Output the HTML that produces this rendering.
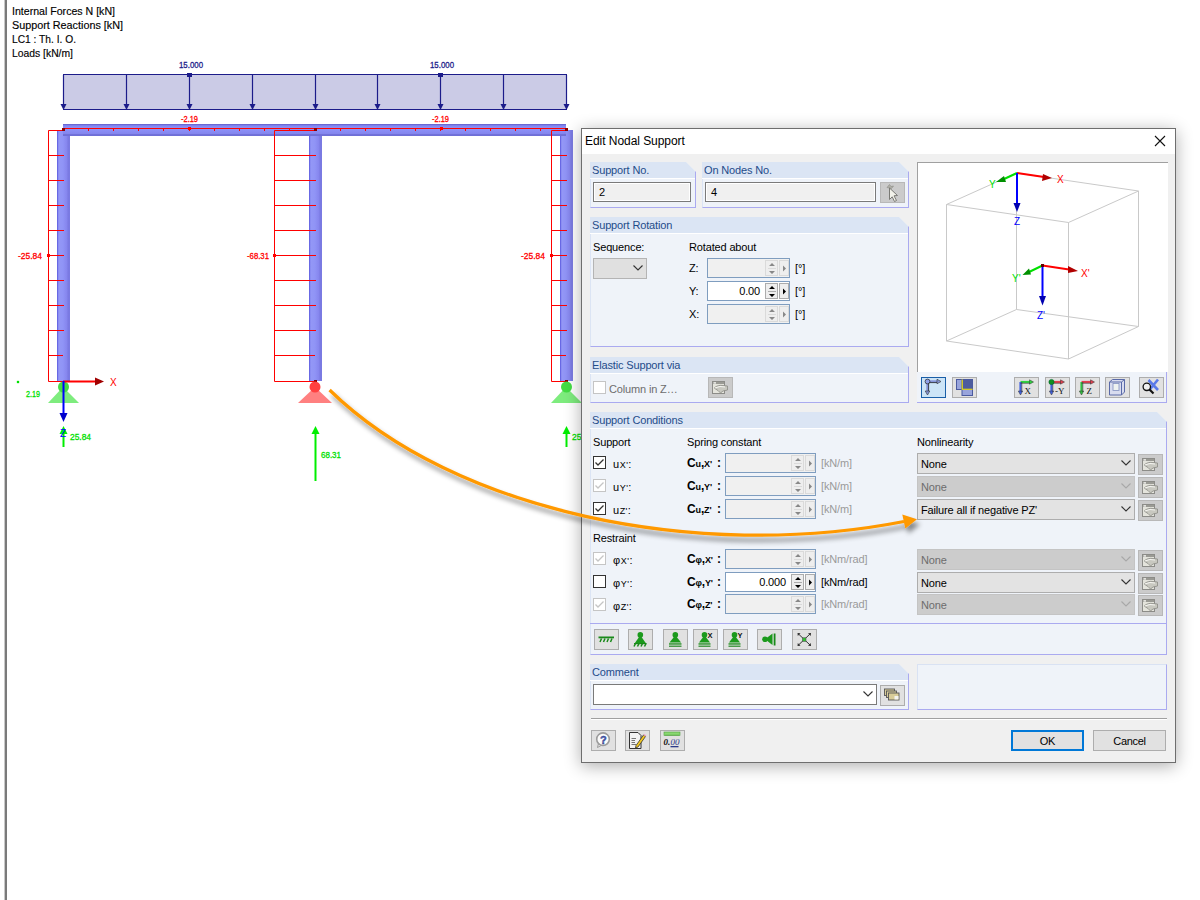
<!DOCTYPE html>
<html><head><meta charset="utf-8">
<style>
html,body{margin:0;padding:0;width:1200px;height:900px;overflow:hidden;background:#fff;}
body{position:relative;font-family:"Liberation Sans",sans-serif;}
.abs{position:absolute;}
svg{position:absolute;left:0;top:0;}
.t{position:absolute;font-size:11px;letter-spacing:-0.15px;white-space:nowrap;line-height:14px;color:#000;}
.grp{position:absolute;box-sizing:border-box;background:#eff3f9;border-left:1px solid #dbe4f4;border-right:1px solid #aaaaf0;border-bottom:1px solid #aaaaf0;clip-path:polygon(0 0,calc(100% - 10px) 0,100% 10px,100% 100%,0 100%);}
.gh{position:absolute;left:-1px;top:0;right:0;height:16px;background:#dbe5f4;border-bottom:1px solid #fff;font-size:11px;letter-spacing:-0.15px;color:#1f4c8a;line-height:16px;padding-left:2px;white-space:nowrap;}
.gh span{position:relative;top:-1px;}
.box{position:absolute;box-sizing:border-box;}
.inp{position:absolute;box-sizing:border-box;border:1px solid #7f9dbf;background:#f0f0f0;}
.inp.en{background:#fff;}
.spn{position:absolute;box-sizing:border-box;top:1px;bottom:1px;border:1px solid #dadada;background:#eeeeee;}
.en .spn{border-color:#acacac;}
.cmb{position:absolute;box-sizing:border-box;border:1px solid #adadad;background:#e3e3e3;height:21px;}
.cmb.dis{border-color:#c4c4c4;background:#cccccc;}
.btn{position:absolute;box-sizing:border-box;border:1px solid #adadad;background:#e1e1e1;}
.chk{position:absolute;box-sizing:border-box;width:13px;height:13px;border:1px solid #333;background:#fff;}
.chk.dis{border-color:#c5c5c5;}

</style></head>
<body>
<!-- left frame line -->
<div class="abs" style="left:4px;top:0;width:1px;height:900px;background:#c8c8c8"></div>
<div class="abs" style="left:5px;top:0;width:2px;height:900px;background:#7a7a7a"></div>

<!-- structure drawing -->
<svg width="1200" height="900" viewBox="0 0 1200 900" style="font-family:'Liberation Sans',sans-serif">
  <g font-size="11" fill="#000" stroke="#000" stroke-width="0.15">
    <text x="12" y="15" textLength="103" lengthAdjust="spacingAndGlyphs">Internal Forces N [kN]</text>
    <text x="12" y="29" textLength="111" lengthAdjust="spacingAndGlyphs">Support Reactions [kN]</text>
    <text x="12" y="43" textLength="64" lengthAdjust="spacingAndGlyphs">LC1 : Th. I. O.</text>
    <text x="12" y="57" textLength="61" lengthAdjust="spacingAndGlyphs">Loads [kN/m]</text>
  </g>
  <!-- load -->
  <rect x="63.5" y="74.5" width="503" height="35" fill="#cbcbe6" stroke="#1c1c8a" stroke-width="1"/>
  <g stroke="#1c1c8a" stroke-width="1.2" fill="#1c1c8a">
    <line x1="63.5" y1="75" x2="63.5" y2="105"/>
    <line x1="126.5" y1="75" x2="126.5" y2="105"/>
    <line x1="189.5" y1="75" x2="189.5" y2="105"/>
    <line x1="252.5" y1="75" x2="252.5" y2="105"/>
    <line x1="315.5" y1="75" x2="315.5" y2="105"/>
    <line x1="377.5" y1="75" x2="377.5" y2="105"/>
    <line x1="440.5" y1="75" x2="440.5" y2="105"/>
    <line x1="503.5" y1="75" x2="503.5" y2="105"/>
    <line x1="566.5" y1="75" x2="566.5" y2="105"/>
  </g>
  <g fill="#1c1c8a">
    <path d="M60.5 104 L66.5 104 L63.5 110 Z"/>
    <path d="M123.5 104 L129.5 104 L126.5 110 Z"/>
    <path d="M186.5 104 L192.5 104 L189.5 110 Z"/>
    <path d="M249.5 104 L255.5 104 L252.5 110 Z"/>
    <path d="M312.5 104 L318.5 104 L315.5 110 Z"/>
    <path d="M374.5 104 L380.5 104 L377.5 110 Z"/>
    <path d="M437.5 104 L443.5 104 L440.5 110 Z"/>
    <path d="M500.5 104 L506.5 104 L503.5 110 Z"/>
    <path d="M563.5 104 L569.5 104 L566.5 110 Z"/>
    <rect x="187" y="73" width="5" height="4"/>
    <rect x="438" y="73" width="5" height="4"/>
  </g>
  <g font-size="9.3" fill="#1c1c8a" stroke="#1c1c8a" stroke-width="0.3">
    <text x="179" y="68" textLength="24" lengthAdjust="spacingAndGlyphs">15.000</text>
    <text x="430" y="68" textLength="24" lengthAdjust="spacingAndGlyphs">15.000</text>
  </g>
  <!-- beam & columns -->
  <defs>
    <linearGradient id="gb" x1="0" y1="0" x2="0" y2="1">
      <stop offset="0" stop-color="#6a6ad2"/><stop offset="0.09" stop-color="#6a6ad2"/>
      <stop offset="0.09" stop-color="#7a7cec"/><stop offset="0.25" stop-color="#8a90f6"/>
      <stop offset="0.45" stop-color="#8c90f8"/><stop offset="0.8" stop-color="#8486ee"/>
      <stop offset="0.83" stop-color="#7272da"/><stop offset="1" stop-color="#6e6ed6"/>
    </linearGradient>
    <linearGradient id="gc" x1="0" y1="0" x2="1" y2="0">
      <stop offset="0" stop-color="#6868e4"/><stop offset="0.1" stop-color="#6868e4"/>
      <stop offset="0.12" stop-color="#9498f6"/><stop offset="0.45" stop-color="#9094f6"/>
      <stop offset="0.75" stop-color="#8686ee"/><stop offset="0.85" stop-color="#7a7ae2"/><stop offset="1" stop-color="#7a7ae2"/>
    </linearGradient>
  </defs>
  <rect x="57" y="130" width="13" height="251" fill="url(#gc)"/>
  <rect x="309" y="130" width="13" height="251" fill="url(#gc)"/>
  <rect x="560" y="130" width="13" height="251" fill="url(#gc)"/>
  <rect x="63" y="124" width="503" height="12" fill="url(#gb)"/>
  <!-- red N diagram -->
  <g stroke="#ff0000" stroke-width="1" fill="none">
    <line x1="63" y1="128.5" x2="566" y2="128.5"/>
    <path id="tk" d="M88.5 128 v3 M113.5 128 v3 M138.5 128 v3 M163.5 128 v3 M189.5 128 v3 M214.5 128 v3 M239.5 128 v3 M264.5 128 v3 M289.5 128 v3 M340.5 128 v3 M365.5 128 v3 M390.5 128 v3 M415.5 128 v3 M440.5 128 v3 M465.5 128 v3 M490.5 128 v3 M515.5 128 v3 M540.5 128 v3"/>
    <path d="M48.5 130.5 H64 M48.5 130.5 V381.5 H64 M48.5 155.5 H64 M48.5 180.5 H64 M48.5 205.5 H64 M48.5 230.5 H64 M48.5 255.5 H64 M48.5 280.5 H64 M48.5 305.5 H64 M48.5 330.5 H64 M48.5 355.5 H63"/>
    <path d="M274.5 130.5 H316 M274.5 130.5 V381.5 H316 M274.5 155.5 H316 M274.5 180.5 H316 M274.5 205.5 H316 M274.5 230.5 H316 M274.5 255.5 H316 M274.5 280.5 H316 M274.5 305.5 H316 M274.5 330.5 H316 M274.5 355.5 H315"/>
    <path d="M551.5 130.5 H567 M551.5 130.5 V381.5 H567 M551.5 155.5 H567 M551.5 180.5 H567 M551.5 205.5 H567 M551.5 230.5 H567 M551.5 255.5 H567 M551.5 280.5 H567 M551.5 305.5 H567 M551.5 330.5 H567 M551.5 355.5 H566"/>
  </g>
  <g fill="#8b0000">
    <rect x="62" y="128" width="3" height="3"/>
    <rect x="314" y="128" width="3" height="3"/>
    <rect x="565" y="128" width="3" height="3"/>
    <rect x="314" y="380" width="3" height="3"/>
    <rect x="565" y="380" width="3" height="3"/>
  </g>
  <g fill="#ff0000">
    <rect x="188" y="127" width="3" height="3"/>
    <rect x="440" y="127" width="3" height="3"/>
    <rect x="47" y="254" width="3" height="3"/>
    <rect x="273" y="254" width="3" height="3"/>
    <rect x="550" y="254" width="3" height="3"/>
  </g>
  <g font-size="9.3" fill="#ff0000" stroke="#ff0000" stroke-width="0.3">
    <text x="181" y="122" textLength="17" lengthAdjust="spacingAndGlyphs">-2.19</text>
    <text x="432" y="122" textLength="17" lengthAdjust="spacingAndGlyphs">-2.19</text>
    <text x="18" y="259" textLength="24" lengthAdjust="spacingAndGlyphs">-25.84</text>
    <text x="247" y="259" textLength="22" lengthAdjust="spacingAndGlyphs">-68.31</text>
    <text x="521" y="259" textLength="24" lengthAdjust="spacingAndGlyphs">-25.84</text>
  </g>
  <!-- supports -->
  <g>
    <path d="M48 403 L79 403 L63 387 Z" fill="#7eec7e"/>
    <circle cx="63.5" cy="387" r="5.5" fill="#44dc44"/>
    <path d="M298 403 L332 403 L315 387 Z" fill="#ff8080"/>
    <circle cx="315" cy="387" r="5.5" fill="#ff4040"/>
    <path d="M551 403 L582 403 L566 387 Z" fill="#7eec7e"/>
    <circle cx="566.5" cy="387" r="5.5" fill="#44dc44"/>
  </g>
  <!-- axes -->
  <line x1="63" y1="381.5" x2="96" y2="381.5" stroke="#ff0000" stroke-width="2"/>
  <path d="M95 377.5 L104 381.5 L95 385.5 Z" fill="#a00000"/>
  <text x="110" y="386" font-size="10" fill="#ff0000">X</text>
  <line x1="63.5" y1="381" x2="63.5" y2="414" stroke="#0000ff" stroke-width="2"/>
  <path d="M59.5 413 L67.5 413 L63.5 422 Z" fill="#0000cc"/>
  <!-- reactions -->
  <g stroke="#00ee00" stroke-width="2">
    <line x1="63.5" y1="447" x2="63.5" y2="432"/>
    <line x1="315.5" y1="481" x2="315.5" y2="432"/>
    <line x1="566.5" y1="447" x2="566.5" y2="432"/>
  </g>
  <g fill="#00ee00">
    <path d="M59.5 434 L67.5 434 L63.5 426 Z"/>
    <path d="M311.5 434 L319.5 434 L315.5 426 Z"/>
    <path d="M562.5 434 L570.5 434 L566.5 426 Z"/>
  </g>
  <text x="60" y="437" font-size="10" fill="#0000ff">Z</text>
  <g font-size="9.3" fill="#00e000" stroke="#00e000" stroke-width="0.3">
    <text x="70" y="440" textLength="21" lengthAdjust="spacingAndGlyphs">25.84</text>
    <text x="321" y="458" textLength="20" lengthAdjust="spacingAndGlyphs">68.31</text>
    <text x="572" y="440" textLength="21" lengthAdjust="spacingAndGlyphs">25.84</text>
    <text x="26" y="397" textLength="14" lengthAdjust="spacingAndGlyphs">2.19</text>
    <rect x="17" y="381" width="2" height="2"/>
  </g>
</svg>

<!-- DIALOG -->
<div class="box" style="left:581px;top:128px;width:595px;height:635px;border:1px solid #6e6e6e;background:#f0f0f0;box-shadow:0 3px 16px rgba(0,0,0,0.32)"></div>
<div class="box" style="left:582px;top:129px;width:593px;height:25px;background:#fff"></div>
<div class="t" style="left:585px;top:134px;font-size:12px;letter-spacing:-0.05px">Edit Nodal Support</div>
<svg style="left:1154px;top:135px" width="12" height="12"><path d="M1 1 L11 11 M11 1 L1 11" stroke="#111" stroke-width="1.1"/></svg>
<div class="grp" style="left:590px;top:162px;width:106px;height:46px"><div class="gh">Support No.</div></div>
<div class="grp" style="left:702px;top:162px;width:207px;height:46px"><div class="gh">On Nodes No.</div></div>
<div class="grp" style="left:590px;top:217px;width:319px;height:130px"><div class="gh">Support Rotation</div></div>
<div class="grp" style="left:590px;top:357px;width:319px;height:46px"><div class="gh">Elastic Support via</div></div>
<div class="grp" style="left:590px;top:412px;width:577px;height:243px"><div class="gh">Support Conditions</div></div>
<div class="grp" style="left:590px;top:664px;width:319px;height:46px"><div class="gh">Comment</div></div>
<div class="box" style="left:917px;top:664px;width:250px;height:46px;background:#eff3f9;border-top:1px solid #d9e2f3;border-left:1px solid #d9e2f3;border-right:1px solid #aaaaf0;border-bottom:1px solid #aaaaf0"></div>
<div class="box" style="left:917px;top:372px;width:250px;height:31px;background:#eff3f9;border-right:1px solid #aaaaf0;border-bottom:1px solid #aaaaf0"></div>
<div class="box" style="left:917px;top:162px;width:251px;height:210px;background:#fff;border-top:1px solid #a0a0a0;border-left:1px solid #a0a0a0"></div>
<svg style="left:917px;top:163px" width="250" height="209" viewBox="917 163 250 209">
<g stroke="#c9c9c9" stroke-width="1" fill="none">
<path d="M946.5 204.5 L1016.5 173 L1138.5 191 L1068.5 222.5 Z"/>
<path d="M946.5 341 L1016.5 309.5 L1138.5 326.5 L1068.5 359 Z"/>
<path d="M946.5 204.5 V341 M1016.5 173 V309.5 M1138.5 191 V326.5 M1068.5 222.5 V359"/>
</g>
<g stroke-width="2" fill="none">
<line x1="1017" y1="173" x2="1044" y2="177" stroke="#ff0000"/>
<line x1="1017" y1="173" x2="1002" y2="180" stroke="#00e000"/>
<line x1="1017" y1="173" x2="1017" y2="204" stroke="#0000ff"/>
<line x1="1042.5" y1="265.5" x2="1069" y2="269.5" stroke="#ff0000"/>
<line x1="1042.5" y1="265.5" x2="1028" y2="272.5" stroke="#00e000"/>
<line x1="1042.5" y1="265.5" x2="1042.5" y2="297" stroke="#0000ff"/>
</g>
<g>
<path d="M1043 174 L1052 178 L1042 181 Z" fill="#b00000"/>
<path d="M1004 176 L996 182 L1006 182 Z" fill="#009000"/>
<path d="M1013.5 203 L1020.5 203 L1017 212 Z" fill="#0000b0"/>
<path d="M1068 266 L1078 271 L1068 273 Z" fill="#b00000"/>
<path d="M1029 268.5 L1022.5 275 L1031 274.5 Z" fill="#009000"/>
<path d="M1039 296 L1046 296 L1042.5 305.5 Z" fill="#0000b0"/>
<rect x="1041" y="264" width="3" height="3" fill="#600000"/>
</g>
<g font-size="10" font-family="Liberation Sans">
<text x="1057" y="183" fill="#ff0000">X</text>
<text x="989" y="188" fill="#00e000">Y</text>
<text x="1014" y="225" fill="#0000ff">Z</text>
<text x="1081" y="277" fill="#ff0000">X'</text>
<text x="1012" y="282" fill="#00e000">Y'</text>
<text x="1037" y="319" fill="#0000ff">Z'</text>
</g>
</svg>
<div class="box" style="left:591px;top:718px;width:576px;height:1px;background:#a0a0a0"></div>
<div class="box" style="left:591px;top:719px;width:576px;height:1px;background:#fff"></div>
<div class="box" style="left:593px;top:182px;width:98px;height:20px;border:1px solid #7a7a7a;background:#f0f0f0;box-shadow:inset 0 0 0 1px #fff"></div>
<div class="t" style="left:599px;top:185px;">2</div>
<div class="box" style="left:705px;top:182px;width:171px;height:20px;border:1px solid #7a7a7a;background:#f0f0f0;box-shadow:inset 0 0 0 1px #fff"></div>
<div class="t" style="left:711px;top:185px;">4</div>
<div class="box" style="left:880px;top:182px;width:25px;height:21px;background:#cbcbcb;border:1px solid #b8b8b8"></div>
<div class="t" style="left:593px;top:240px;">Sequence:</div>
<div class="t" style="left:689px;top:240px;">Rotated about</div>
<div class="cmb" style="left:593px;top:258px;width:54px;background:#e0e0e0;border-color:#b4b4b4"></div>
<svg style="left:633px;top:265px" width="10" height="6"><path d="M0.5 0.5 L5 5 L9.5 0.5" fill="none" stroke="#333" stroke-width="1.1"/></svg>
<div class="t" style="left:689px;top:261px;">Z:</div>
<div class="t" style="left:689px;top:284px;">Y:</div>
<div class="t" style="left:689px;top:307px;">X:</div>
<div class="inp" style="left:707px;top:258px;width:83px;height:20px"><div class="spn" style="left:57px;width:13px"></div><div class="spn" style="left:71px;width:10px"></div><svg style="left:60px;top:3px" width="8" height="13"><path d="M1 4 L4 1 L7 4 Z M1 9 L4 12 L7 9 Z" fill="#888"/><rect x="0" y="6" width="8" height="1" fill="#dadada"/></svg><svg style="left:74px;top:6px" width="5" height="8"><path d="M1 0.5 L4 3.5 L1 6.5 Z" fill="#888"/></svg></div>
<div class="inp en" style="left:707px;top:281px;width:83px;height:20px"><div class="spn" style="left:57px;width:13px"></div><div class="spn" style="left:71px;width:10px"></div><svg style="left:60px;top:3px" width="8" height="13"><path d="M1 4 L4 1 L7 4 Z M1 9 L4 12 L7 9 Z" fill="#000"/><rect x="0" y="6" width="8" height="1" fill="#acacac"/></svg><svg style="left:74px;top:6px" width="5" height="8"><path d="M1 0.5 L4 3.5 L1 6.5 Z" fill="#000"/></svg></div><div class="t" style="left:707px;top:284px;width:53px;text-align:right">0.00</div>
<div class="inp" style="left:707px;top:304px;width:83px;height:20px"><div class="spn" style="left:57px;width:13px"></div><div class="spn" style="left:71px;width:10px"></div><svg style="left:60px;top:3px" width="8" height="13"><path d="M1 4 L4 1 L7 4 Z M1 9 L4 12 L7 9 Z" fill="#888"/><rect x="0" y="6" width="8" height="1" fill="#dadada"/></svg><svg style="left:74px;top:6px" width="5" height="8"><path d="M1 0.5 L4 3.5 L1 6.5 Z" fill="#888"/></svg></div>
<div class="t" style="left:795px;top:261px;">[°]</div>
<div class="t" style="left:795px;top:284px;">[°]</div>
<div class="t" style="left:795px;top:307px;">[°]</div>
<div class="chk dis" style="left:593px;top:381px"></div>
<div class="t" style="left:609px;top:382px;color:#6d6d6d">Column in Z…</div>
<div class="box" style="left:708px;top:377px;width:25px;height:21px;background:#cbcbcb;border:1px solid #b8b8b8"></div>
<div class="t" style="left:593px;top:435px;">Support</div>
<div class="t" style="left:687px;top:435px;">Spring constant</div>
<div class="t" style="left:917px;top:435px;">Nonlinearity</div>
<div class="chk" style="left:593px;top:456px"></div>
<svg style="left:595px;top:459px" width="9" height="7"><path d="M0.5 3.5 L3 6 L8.5 0.5" fill="none" stroke="#333" stroke-width="1.3"/></svg>
<div class="t" style="left:613px;letter-spacing:0.5px;top:457px;">u<span style="font-size:9px">X'</span>:</div>
<div class="chk dis" style="left:593px;top:479px"></div>
<svg style="left:595px;top:482px" width="9" height="7"><path d="M0.5 3.5 L3 6 L8.5 0.5" fill="none" stroke="#c5c5c5" stroke-width="1.3"/></svg>
<div class="t" style="left:613px;letter-spacing:0.5px;top:480px;">u<span style="font-size:9px">Y'</span>:</div>
<div class="chk" style="left:593px;top:502px"></div>
<svg style="left:595px;top:505px" width="9" height="7"><path d="M0.5 3.5 L3 6 L8.5 0.5" fill="none" stroke="#333" stroke-width="1.3"/></svg>
<div class="t" style="left:613px;letter-spacing:0.5px;top:503px;">u<span style="font-size:9px">Z'</span>:</div>
<div class="t" style="left:687px;top:456px;font-size:12px"><b>C<span style="font-size:9px">u</span>,<span style="font-size:9px">X'</span></b></div>
<div class="t" style="left:717px;top:456px;font-size:12px"><b>:</b></div>
<div class="inp" style="left:725px;top:453px;width:91px;height:20px"><div class="spn" style="left:65px;width:13px"></div><div class="spn" style="left:79px;width:10px"></div><svg style="left:68px;top:3px" width="8" height="13"><path d="M1 4 L4 1 L7 4 Z M1 9 L4 12 L7 9 Z" fill="#888"/><rect x="0" y="6" width="8" height="1" fill="#dadada"/></svg><svg style="left:82px;top:6px" width="5" height="8"><path d="M1 0.5 L4 3.5 L1 6.5 Z" fill="#888"/></svg></div>
<div class="t" style="left:821px;top:456px;color:#9a9a9a">[kN/m]</div>
<div class="t" style="left:687px;top:479px;font-size:12px"><b>C<span style="font-size:9px">u</span>,<span style="font-size:9px">Y'</span></b></div>
<div class="t" style="left:717px;top:479px;font-size:12px"><b>:</b></div>
<div class="inp" style="left:725px;top:476px;width:91px;height:20px"><div class="spn" style="left:65px;width:13px"></div><div class="spn" style="left:79px;width:10px"></div><svg style="left:68px;top:3px" width="8" height="13"><path d="M1 4 L4 1 L7 4 Z M1 9 L4 12 L7 9 Z" fill="#888"/><rect x="0" y="6" width="8" height="1" fill="#dadada"/></svg><svg style="left:82px;top:6px" width="5" height="8"><path d="M1 0.5 L4 3.5 L1 6.5 Z" fill="#888"/></svg></div>
<div class="t" style="left:821px;top:479px;color:#9a9a9a">[kN/m]</div>
<div class="t" style="left:687px;top:502px;font-size:12px"><b>C<span style="font-size:9px">u</span>,<span style="font-size:9px">Z'</span></b></div>
<div class="t" style="left:717px;top:502px;font-size:12px"><b>:</b></div>
<div class="inp" style="left:725px;top:499px;width:91px;height:20px"><div class="spn" style="left:65px;width:13px"></div><div class="spn" style="left:79px;width:10px"></div><svg style="left:68px;top:3px" width="8" height="13"><path d="M1 4 L4 1 L7 4 Z M1 9 L4 12 L7 9 Z" fill="#888"/><rect x="0" y="6" width="8" height="1" fill="#dadada"/></svg><svg style="left:82px;top:6px" width="5" height="8"><path d="M1 0.5 L4 3.5 L1 6.5 Z" fill="#888"/></svg></div>
<div class="t" style="left:821px;top:502px;color:#9a9a9a">[kN/m]</div>
<div class="cmb" style="left:917px;top:453px;width:218px"></div><div class="t" style="left:921px;top:457px;">None</div><svg style="left:1121px;top:460px" width="10" height="6"><path d="M0.5 0.5 L5 5 L9.5 0.5" fill="none" stroke="#333" stroke-width="1.1"/></svg><div class="box" style="left:1138px;top:454px;width:25px;height:21px;background:#cbcbcb;border:1px solid #b8b8b8"></div>
<div class="cmb dis" style="left:917px;top:476px;width:218px"></div><div class="t" style="left:921px;top:480px;color:#6d6d6d">None</div><svg style="left:1121px;top:483px" width="10" height="6"><path d="M0.5 0.5 L5 5 L9.5 0.5" fill="none" stroke="#a8a8a8" stroke-width="1.1"/></svg><div class="box" style="left:1138px;top:477px;width:25px;height:21px;background:#cbcbcb;border:1px solid #b8b8b8"></div>
<div class="cmb" style="left:917px;top:499px;width:218px"></div><div class="t" style="left:921px;top:503px;">Failure all if negative PZ'</div><svg style="left:1121px;top:506px" width="10" height="6"><path d="M0.5 0.5 L5 5 L9.5 0.5" fill="none" stroke="#333" stroke-width="1.1"/></svg><div class="box" style="left:1138px;top:500px;width:25px;height:21px;background:#cbcbcb;border:1px solid #b8b8b8"></div>
<div class="t" style="left:593px;top:531px;">Restraint</div>
<div class="chk dis" style="left:593px;top:552px"></div>
<svg style="left:595px;top:555px" width="9" height="7"><path d="M0.5 3.5 L3 6 L8.5 0.5" fill="none" stroke="#c5c5c5" stroke-width="1.3"/></svg>
<div class="t" style="left:613px;letter-spacing:0.5px;top:553px;"><span style="color:#000">φ</span><span style="font-size:9px">X'</span>:</div>
<div class="chk" style="left:593px;top:575px"></div>
<div class="t" style="left:613px;letter-spacing:0.5px;top:576px;"><span style="color:#000">φ</span><span style="font-size:9px">Y'</span>:</div>
<div class="chk dis" style="left:593px;top:598px"></div>
<svg style="left:595px;top:601px" width="9" height="7"><path d="M0.5 3.5 L3 6 L8.5 0.5" fill="none" stroke="#c5c5c5" stroke-width="1.3"/></svg>
<div class="t" style="left:613px;letter-spacing:0.5px;top:599px;"><span style="color:#000">φ</span><span style="font-size:9px">Z'</span>:</div>
<div class="t" style="left:687px;top:552px;font-size:12px"><b>C<span style="font-size:9px">φ</span>,<span style="font-size:9px">X'</span></b></div>
<div class="t" style="left:717px;top:552px;font-size:12px"><b>:</b></div>
<div class="inp" style="left:725px;top:549px;width:91px;height:20px"><div class="spn" style="left:65px;width:13px"></div><div class="spn" style="left:79px;width:10px"></div><svg style="left:68px;top:3px" width="8" height="13"><path d="M1 4 L4 1 L7 4 Z M1 9 L4 12 L7 9 Z" fill="#888"/><rect x="0" y="6" width="8" height="1" fill="#dadada"/></svg><svg style="left:82px;top:6px" width="5" height="8"><path d="M1 0.5 L4 3.5 L1 6.5 Z" fill="#888"/></svg></div>
<div class="t" style="left:821px;top:552px;color:#9a9a9a">[kNm/rad]</div>
<div class="t" style="left:687px;top:575px;font-size:12px"><b>C<span style="font-size:9px">φ</span>,<span style="font-size:9px">Y'</span></b></div>
<div class="t" style="left:717px;top:575px;font-size:12px"><b>:</b></div>
<div class="inp en" style="left:725px;top:572px;width:91px;height:20px"><div class="spn" style="left:65px;width:13px"></div><div class="spn" style="left:79px;width:10px"></div><svg style="left:68px;top:3px" width="8" height="13"><path d="M1 4 L4 1 L7 4 Z M1 9 L4 12 L7 9 Z" fill="#000"/><rect x="0" y="6" width="8" height="1" fill="#acacac"/></svg><svg style="left:82px;top:6px" width="5" height="8"><path d="M1 0.5 L4 3.5 L1 6.5 Z" fill="#000"/></svg></div><div class="t" style="left:725px;top:575px;width:61px;text-align:right">0.000</div>
<div class="t" style="left:821px;top:575px;">[kNm/rad]</div>
<div class="t" style="left:687px;top:597px;font-size:12px"><b>C<span style="font-size:9px">φ</span>,<span style="font-size:9px">Z'</span></b></div>
<div class="t" style="left:717px;top:597px;font-size:12px"><b>:</b></div>
<div class="inp" style="left:725px;top:594px;width:91px;height:20px"><div class="spn" style="left:65px;width:13px"></div><div class="spn" style="left:79px;width:10px"></div><svg style="left:68px;top:3px" width="8" height="13"><path d="M1 4 L4 1 L7 4 Z M1 9 L4 12 L7 9 Z" fill="#888"/><rect x="0" y="6" width="8" height="1" fill="#dadada"/></svg><svg style="left:82px;top:6px" width="5" height="8"><path d="M1 0.5 L4 3.5 L1 6.5 Z" fill="#888"/></svg></div>
<div class="t" style="left:821px;top:597px;color:#9a9a9a">[kNm/rad]</div>
<div class="cmb dis" style="left:917px;top:549px;width:218px"></div><div class="t" style="left:921px;top:553px;color:#6d6d6d">None</div><svg style="left:1121px;top:556px" width="10" height="6"><path d="M0.5 0.5 L5 5 L9.5 0.5" fill="none" stroke="#a8a8a8" stroke-width="1.1"/></svg><div class="box" style="left:1138px;top:550px;width:25px;height:21px;background:#cbcbcb;border:1px solid #b8b8b8"></div>
<div class="cmb" style="left:917px;top:572px;width:218px"></div><div class="t" style="left:921px;top:576px;">None</div><svg style="left:1121px;top:579px" width="10" height="6"><path d="M0.5 0.5 L5 5 L9.5 0.5" fill="none" stroke="#333" stroke-width="1.1"/></svg><div class="box" style="left:1138px;top:573px;width:25px;height:21px;background:#cbcbcb;border:1px solid #b8b8b8"></div>
<div class="cmb dis" style="left:917px;top:594px;width:218px"></div><div class="t" style="left:921px;top:598px;color:#6d6d6d">None</div><svg style="left:1121px;top:601px" width="10" height="6"><path d="M0.5 0.5 L5 5 L9.5 0.5" fill="none" stroke="#a8a8a8" stroke-width="1.1"/></svg><div class="box" style="left:1138px;top:595px;width:25px;height:21px;background:#cbcbcb;border:1px solid #b8b8b8"></div>
<div class="box" style="left:590px;top:623px;width:576px;height:1px;background:#aaaaf0"></div>
<div class="btn" style="left:594px;top:629px;width:25px;height:21px"></div>
<div class="btn" style="left:628px;top:629px;width:25px;height:21px"></div>
<div class="btn" style="left:663px;top:629px;width:25px;height:21px"></div>
<div class="btn" style="left:693px;top:629px;width:25px;height:21px"></div>
<div class="btn" style="left:723px;top:629px;width:25px;height:21px"></div>
<div class="btn" style="left:757px;top:629px;width:25px;height:21px"></div>
<div class="btn" style="left:792px;top:629px;width:25px;height:21px"></div>
<div class="box" style="left:921px;top:377px;width:25px;height:21px;border:1px solid #1a5fa8;background:#cce4f7"></div>
<div class="btn" style="left:952px;top:377px;width:25px;height:21px"></div>
<div class="btn" style="left:1014px;top:377px;width:25px;height:21px"></div>
<div class="btn" style="left:1045px;top:377px;width:25px;height:21px"></div>
<div class="btn" style="left:1075px;top:377px;width:25px;height:21px"></div>
<div class="btn" style="left:1105px;top:377px;width:25px;height:21px"></div>
<div class="btn" style="left:1139px;top:377px;width:25px;height:21px"></div>
<div class="box" style="left:593px;top:684px;width:284px;height:21px;border:1px solid #7a7a7a;background:#fff"></div>
<svg style="left:863px;top:691px" width="10" height="6"><path d="M0.5 0.5 L5 5 L9.5 0.5" fill="none" stroke="#333" stroke-width="1.1"/></svg>
<div class="btn" style="left:880px;top:685px;width:25px;height:21px"></div>
<div class="btn" style="left:591px;top:730px;width:25px;height:21px"></div>
<div class="btn" style="left:625px;top:730px;width:25px;height:21px"></div>
<div class="btn" style="left:660px;top:730px;width:25px;height:21px"></div>
<div class="box" style="left:1011px;top:730px;width:73px;height:21px;border:2px solid #0078d7;background:#e1e1e1"></div>
<div class="t" style="left:1011px;top:734px;width:73px;text-align:center;font-size:11px;letter-spacing:-0.2px">OK</div>
<div class="btn" style="left:1093px;top:730px;width:73px;height:21px"></div>
<div class="t" style="left:1093px;top:734px;width:73px;text-align:center;font-size:11px;letter-spacing:-0.3px">Cancel</div>
<!-- ICONS -->
<svg style="left:880px;top:182px" width="25" height="21" viewBox="0 0 25 21"><path d="M7 5.5 L9.5 2.5 L11 4.5 L13.5 4 L11.5 6.5 Z" fill="#b0b0a8" stroke="#8a8a84" stroke-width="0.6"/><path d="M9.5 6 L17.5 13.5 L14 13.8 L16.5 18.5 L14.5 19.5 L12.2 14.8 L9.5 17.5 Z" fill="#f2f2ea" stroke="#7a7a75" stroke-width="1" stroke-linejoin="round"/></svg>
<svg style="left:708px;top:377px" width="25" height="21" viewBox="0 0 25 21"><rect x="4.5" y="4.5" width="12" height="12" fill="#e4e4dc" stroke="#8c8c88"/><rect x="5" y="5" width="11" height="2" fill="#9a9a94"/><rect x="5.5" y="5.2" width="2.5" height="1.4" fill="#f4f4f0"/><path d="M6 11 C9 8.5 12 8 15 8.5 L19.5 9 L19.5 13 L15 14 L12.5 16 L10 13.5 Z" fill="#c8c8c0" stroke="#8a8a84" stroke-width="0.8"/><path d="M6.5 11 L12 9.5 L17 10" fill="none" stroke="#f6f6f2" stroke-width="1"/></svg>
<svg style="left:1138px;top:454px" width="25" height="21" viewBox="0 0 25 21"><rect x="4.5" y="4.5" width="12" height="12" fill="#e4e4dc" stroke="#8c8c88"/><rect x="5" y="5" width="11" height="2" fill="#9a9a94"/><rect x="5.5" y="5.2" width="2.5" height="1.4" fill="#f4f4f0"/><path d="M6 11 C9 8.5 12 8 15 8.5 L19.5 9 L19.5 13 L15 14 L12.5 16 L10 13.5 Z" fill="#c8c8c0" stroke="#8a8a84" stroke-width="0.8"/><path d="M6.5 11 L12 9.5 L17 10" fill="none" stroke="#f6f6f2" stroke-width="1"/></svg>
<svg style="left:1138px;top:477px" width="25" height="21" viewBox="0 0 25 21"><rect x="4.5" y="4.5" width="12" height="12" fill="#e4e4dc" stroke="#8c8c88"/><rect x="5" y="5" width="11" height="2" fill="#9a9a94"/><rect x="5.5" y="5.2" width="2.5" height="1.4" fill="#f4f4f0"/><path d="M6 11 C9 8.5 12 8 15 8.5 L19.5 9 L19.5 13 L15 14 L12.5 16 L10 13.5 Z" fill="#c8c8c0" stroke="#8a8a84" stroke-width="0.8"/><path d="M6.5 11 L12 9.5 L17 10" fill="none" stroke="#f6f6f2" stroke-width="1"/></svg>
<svg style="left:1138px;top:500px" width="25" height="21" viewBox="0 0 25 21"><rect x="4.5" y="4.5" width="12" height="12" fill="#e4e4dc" stroke="#8c8c88"/><rect x="5" y="5" width="11" height="2" fill="#9a9a94"/><rect x="5.5" y="5.2" width="2.5" height="1.4" fill="#f4f4f0"/><path d="M6 11 C9 8.5 12 8 15 8.5 L19.5 9 L19.5 13 L15 14 L12.5 16 L10 13.5 Z" fill="#c8c8c0" stroke="#8a8a84" stroke-width="0.8"/><path d="M6.5 11 L12 9.5 L17 10" fill="none" stroke="#f6f6f2" stroke-width="1"/></svg>
<svg style="left:1138px;top:550px" width="25" height="21" viewBox="0 0 25 21"><rect x="4.5" y="4.5" width="12" height="12" fill="#e4e4dc" stroke="#8c8c88"/><rect x="5" y="5" width="11" height="2" fill="#9a9a94"/><rect x="5.5" y="5.2" width="2.5" height="1.4" fill="#f4f4f0"/><path d="M6 11 C9 8.5 12 8 15 8.5 L19.5 9 L19.5 13 L15 14 L12.5 16 L10 13.5 Z" fill="#c8c8c0" stroke="#8a8a84" stroke-width="0.8"/><path d="M6.5 11 L12 9.5 L17 10" fill="none" stroke="#f6f6f2" stroke-width="1"/></svg>
<svg style="left:1138px;top:573px" width="25" height="21" viewBox="0 0 25 21"><rect x="4.5" y="4.5" width="12" height="12" fill="#e4e4dc" stroke="#8c8c88"/><rect x="5" y="5" width="11" height="2" fill="#9a9a94"/><rect x="5.5" y="5.2" width="2.5" height="1.4" fill="#f4f4f0"/><path d="M6 11 C9 8.5 12 8 15 8.5 L19.5 9 L19.5 13 L15 14 L12.5 16 L10 13.5 Z" fill="#c8c8c0" stroke="#8a8a84" stroke-width="0.8"/><path d="M6.5 11 L12 9.5 L17 10" fill="none" stroke="#f6f6f2" stroke-width="1"/></svg>
<svg style="left:1138px;top:595px" width="25" height="21" viewBox="0 0 25 21"><rect x="4.5" y="4.5" width="12" height="12" fill="#e4e4dc" stroke="#8c8c88"/><rect x="5" y="5" width="11" height="2" fill="#9a9a94"/><rect x="5.5" y="5.2" width="2.5" height="1.4" fill="#f4f4f0"/><path d="M6 11 C9 8.5 12 8 15 8.5 L19.5 9 L19.5 13 L15 14 L12.5 16 L10 13.5 Z" fill="#c8c8c0" stroke="#8a8a84" stroke-width="0.8"/><path d="M6.5 11 L12 9.5 L17 10" fill="none" stroke="#f6f6f2" stroke-width="1"/></svg>
<svg style="left:921px;top:377px" width="25" height="21" viewBox="0 0 25 21"><path d="M6.5 4.5 H16.5" stroke="#8494d8" stroke-width="2.4"/><path d="M6.5 5.6 H16.5" stroke="#222" stroke-width="0.8"/><path d="M16 2.2 L20 4.5 L16 6.8 Z" fill="#8494d8" stroke="#333" stroke-width="0.6"/><path d="M6.5 4.5 V14.5" stroke="#8494d8" stroke-width="2.4"/><path d="M7.6 4.5 V14.5" stroke="#222" stroke-width="0.8"/><path d="M4.2 14 L6.5 18 L8.8 14 Z" fill="#8494d8" stroke="#333" stroke-width="0.6"/><circle cx="6.5" cy="4.5" r="2.4" fill="#8fa0e8" stroke="#222" stroke-width="0.7"/></svg>
<svg style="left:952px;top:377px" width="25" height="21" viewBox="0 0 25 21"><rect x="4.5" y="2.5" width="5.5" height="10" fill="#98a4dc" stroke="#4a5aa0"/><rect x="10" y="2.5" width="10.5" height="10" fill="#4d5c9e" stroke="#4a5aa0"/><rect x="10" y="12.5" width="10.5" height="6" fill="#98a4dc" stroke="#4a5aa0"/><path d="M10.2 2.5 V12.3 H20.5" fill="none" stroke="#ffee00" stroke-width="1.1"/></svg>
<svg style="left:1014px;top:377px" width="25" height="21" viewBox="0 0 25 21"><path d="M6.5 5 H16" stroke="#30d040" stroke-width="2.2"/><path d="M15.5 2.8 L19.5 5 L15.5 7.2 Z" fill="#30d040" stroke="#333" stroke-width="0.5"/><path d="M6.5 5 V15" stroke="#4060e0" stroke-width="2.2"/><path d="M4.3 14 L6.5 18 L8.7 14 Z" fill="#4060e0" stroke="#333" stroke-width="0.5"/><path d="M7.8 5 V15" stroke="#333" stroke-width="0.6"/><path d="M6.5 6.3 H16" stroke="#333" stroke-width="0.6"/><text x="10.5" y="17" font-family="Liberation Serif" font-size="9" fill="#111">X</text></svg>
<svg style="left:1045px;top:377px" width="25" height="21" viewBox="0 0 25 21"><path d="M6.5 5 H16" stroke="#e04050" stroke-width="2.2"/><path d="M15.5 2.8 L19.5 5 L15.5 7.2 Z" fill="#e04050" stroke="#333" stroke-width="0.5"/><path d="M6.5 5 V15" stroke="#4060e0" stroke-width="2.2"/><path d="M4.3 14 L6.5 18 L8.7 14 Z" fill="#4060e0" stroke="#333" stroke-width="0.5"/><path d="M7.8 5 V15" stroke="#333" stroke-width="0.6"/><path d="M6.5 6.3 H16" stroke="#333" stroke-width="0.6"/><circle cx="6.5" cy="5" r="2.6" fill="#109020" stroke="#063" stroke-width="0.6"/><text x="10" y="17" font-family="Liberation Serif" font-size="9" fill="#111">-Y</text></svg>
<svg style="left:1075px;top:377px" width="25" height="21" viewBox="0 0 25 21"><path d="M6.5 5 H16" stroke="#e04050" stroke-width="2.2"/><path d="M15.5 2.8 L19.5 5 L15.5 7.2 Z" fill="#e04050" stroke="#333" stroke-width="0.5"/><path d="M6.5 5 V15" stroke="#30c040" stroke-width="2.2"/><path d="M4.3 14 L6.5 18 L8.7 14 Z" fill="#30c040" stroke="#333" stroke-width="0.5"/><path d="M7.8 5 V15" stroke="#333" stroke-width="0.6"/><path d="M6.5 6.3 H16" stroke="#333" stroke-width="0.6"/><text x="11.5" y="17" font-family="Liberation Serif" font-size="9" fill="#111">Z</text></svg>
<svg style="left:1105px;top:377px" width="25" height="21" viewBox="0 0 25 21"><path d="M4.5 5 L7.5 2.5 L19.5 2.5 L19.5 15 L16.5 18 L4.5 18 Z" fill="#d8dcef" stroke="#5a6aa8" stroke-width="1"/><path d="M4.5 5 H16.5 V18 M16.5 5 L19.5 2.5" fill="none" stroke="#5a6aa8" stroke-width="1"/><rect x="8" y="6.5" width="6" height="7" fill="#eef2f0" stroke="#8090c0" stroke-width="0.8"/></svg>
<svg style="left:1139px;top:377px" width="25" height="21" viewBox="0 0 25 21"><path d="M9.5 3 L19 13 M19 2.5 L10 13.5" stroke="#5a7ae8" stroke-width="2.6"/><circle cx="7.8" cy="9.8" r="3.7" fill="#f0f0f0" stroke="#111" stroke-width="1.3"/><path d="M10.5 12.5 L14.5 16.5" stroke="#111" stroke-width="2.2"/></svg>
<svg style="left:594px;top:629px" width="25" height="21" viewBox="0 0 25 21"><rect x="4.5" y="7.5" width="15.5" height="1.8" fill="#1a8a1a"/><path d="M6 13 L7.5 9.5 M9.5 13 L11 9.5 M13 13 L14.5 9.5 M16.5 13 L18 9.5" stroke="#1a8a1a" stroke-width="1.5"/></svg>
<svg style="left:628px;top:629px" width="25" height="21" viewBox="0 0 25 21"><circle cx="12.3" cy="5.9" r="2.8" fill="#1c9a1c"/><path d="M12.3 6.2 L18.1 14.5 L6.500000000000001 14.5 Z" fill="#1c9a1c"/><path d="M6 17.5 L7.5 14.5 M9.5 17.5 L11 14.5 M13 17.5 L14.5 14.5 M16.5 17.5 L18 14.5" stroke="#1a8a1a" stroke-width="1.5"/><rect x="6" y="14" width="12.5" height="1.2" fill="#1a8a1a"/></svg>
<svg style="left:663px;top:629px" width="25" height="21" viewBox="0 0 25 21"><circle cx="12.3" cy="5.9" r="2.8" fill="#1c9a1c"/><path d="M12.3 6.2 L18.1 13.6 L6.500000000000001 13.6 Z" fill="#1c9a1c"/><rect x="6" y="14.3" width="12.5" height="1.3" fill="#1a8a1a"/><rect x="6" y="16.5" width="12.5" height="1.5" fill="#4a9a4a"/></svg>
<svg style="left:693px;top:629px" width="25" height="21" viewBox="0 0 25 21"><circle cx="11.5" cy="5.9" r="2.8" fill="#1c9a1c"/><path d="M11.5 6.2 L17.0 13.6 L6.0 13.6 Z" fill="#1c9a1c"/><rect x="5.5" y="14.3" width="12" height="1.3" fill="#1a8a1a"/><rect x="5.5" y="16.5" width="12" height="1.5" fill="#4a9a4a"/><text x="14.5" y="8.5" font-size="7.5" font-weight="bold" fill="#111" font-family="Liberation Sans">X</text></svg>
<svg style="left:723px;top:629px" width="25" height="21" viewBox="0 0 25 21"><circle cx="11.5" cy="5.9" r="2.8" fill="#1c9a1c"/><path d="M11.5 6.2 L17.0 13.6 L6.0 13.6 Z" fill="#1c9a1c"/><rect x="5.5" y="14.3" width="12" height="1.3" fill="#1a8a1a"/><rect x="5.5" y="16.5" width="12" height="1.5" fill="#4a9a4a"/><text x="14.5" y="8.5" font-size="7.5" font-weight="bold" fill="#111" font-family="Liberation Sans">Y</text></svg>
<svg style="left:757px;top:629px" width="25" height="21" viewBox="0 0 25 21"><circle cx="8" cy="10.3" r="2.8" fill="#1c9a1c"/><path d="M8 10.3 L15.5 4.5 L15.5 16 Z" fill="#1c9a1c"/><rect x="16.7" y="4.5" width="1.8" height="12" fill="#1a8a1a"/></svg>
<svg style="left:792px;top:629px" width="25" height="21" viewBox="0 0 25 21"><path d="M6 4.5 L18.5 16.5 M18.5 4.5 L6 16.5" stroke="#333" stroke-width="1"/><path d="M5.5 4 L8.5 4.3 L5.8 7 Z M19 4 L16 4.3 L18.7 7 Z M5.5 17 L8.5 16.7 L5.8 14 Z M19 17 L16 16.7 L18.7 14 Z" fill="#333"/><rect x="10.5" y="8.8" width="3.5" height="3.5" fill="#30c030" stroke="#555" stroke-width="0.6"/></svg>
<svg style="left:880px;top:685px" width="25" height="21" viewBox="0 0 25 21"><rect x="4.5" y="4" width="10" height="6.5" fill="#d8cc98" stroke="#555" stroke-width="0.9"/><rect x="6.5" y="6" width="10" height="6.5" fill="#d8cc98" stroke="#555" stroke-width="0.9"/><rect x="8.5" y="8" width="10.5" height="7" fill="#d8cc98" stroke="#555" stroke-width="0.9"/><rect x="14.5" y="11" width="4" height="3.5" fill="#f4f4f0"/></svg>
<svg style="left:591px;top:730px" width="25" height="21" viewBox="0 0 25 21"><path d="M7.5 13.5 L6.5 17.5 L11 15" fill="#f4f4f4" stroke="#9a9a9a" stroke-width="1"/><circle cx="12" cy="9.2" r="6.3" fill="#fbfbfb" stroke="#9c9c9c" stroke-width="1.6"/><text x="9" y="14.3" font-size="11" font-weight="bold" fill="#4a5ab8" stroke="#2a3a80" stroke-width="0.4" font-family="Liberation Sans">?</text></svg>
<svg style="left:625px;top:730px" width="25" height="21" viewBox="0 0 25 21"><path d="M4.5 2.5 H13 L16 5.5 V18.5 H4.5 Z" fill="#f2f2f2" stroke="#333" stroke-width="1"/><path d="M6.5 8.5 H11 M6.5 10.5 H10 M6.5 12.5 H10 M6.5 14.5 H11" stroke="#555" stroke-width="0.8"/><path d="M11 15.5 L18.5 5 L20.5 6.5 L13 17 L10.5 18 Z" fill="#f4c820" stroke="#333" stroke-width="0.8"/><path d="M18.5 5 L19.3 3.9 L21.3 5.4 L20.5 6.5 Z" fill="#f0a0c0"/></svg>
<svg style="left:660px;top:730px" width="25" height="21" viewBox="0 0 25 21"><rect x="4" y="2" width="16" height="3.5" fill="#88d870" stroke="#50a040" stroke-width="0.6"/><path d="M6 4.5 V5.5 M8 4.5 V5.5 M10 4.5 V5.5 M12 4.5 V5.5 M14 4.5 V5.5 M16 4.5 V5.5 M18 4.5 V5.5" stroke="#3a8a2a" stroke-width="0.6"/><text x="3.5" y="14.5" font-size="9" font-style="italic" font-weight="bold" fill="#111" font-family="Liberation Serif">0.</text><text x="10.5" y="14.5" font-size="9" font-style="italic" fill="#2a3a8a" font-family="Liberation Serif">00</text><rect x="10.5" y="16" width="8" height="1.3" fill="#2a3a8a"/></svg>
<!-- /ICONS -->
<!-- /DIALOG -->
<svg width="1200" height="900" style="left:0;top:0;pointer-events:none">
<defs><filter id="sh" x="-10%" y="-10%" width="130%" height="140%"><feDropShadow dx="3" dy="5" stdDeviation="2.5" flood-color="#000" flood-opacity="0.45"/></filter></defs>
<g filter="url(#sh)">
<path d="M329.6 390 C453.1 511 697.4 562 904 521.5" fill="none" stroke="#ff9900" stroke-width="3.3"/>
<path d="M917 519.3 L902.3 514.5 L905.3 528.6 Z" fill="#ff9900"/>
</g>
</svg>

</body></html>
